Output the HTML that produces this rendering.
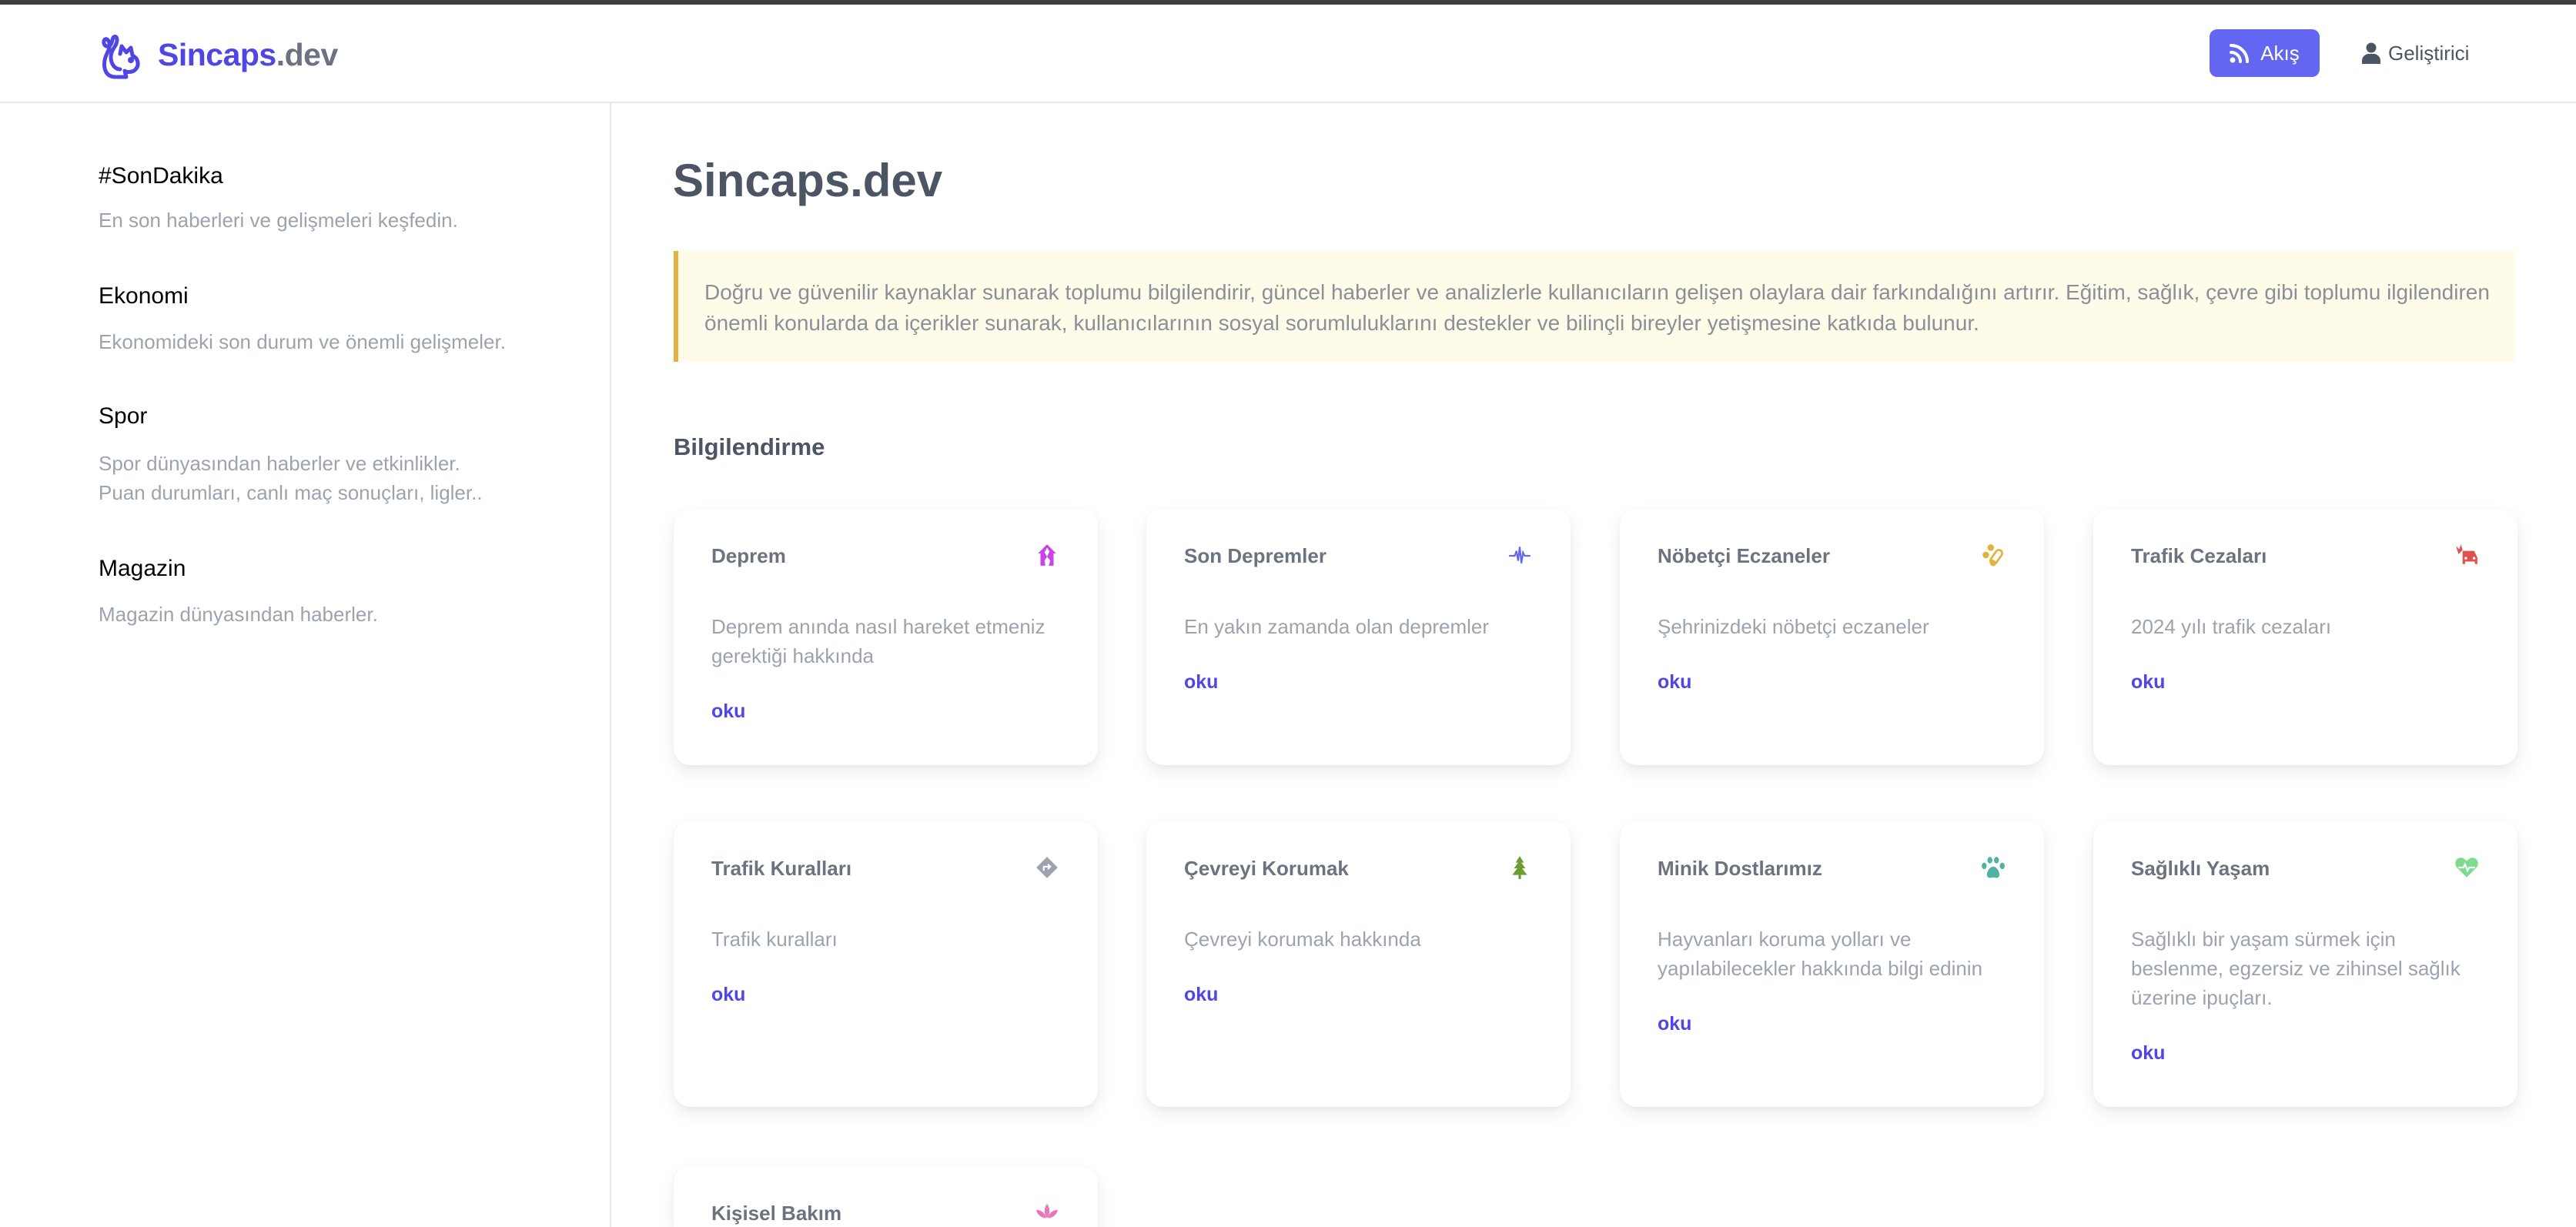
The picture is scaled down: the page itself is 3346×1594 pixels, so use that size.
<!DOCTYPE html>
<html><head><meta charset="utf-8">
<style>
*{box-sizing:border-box;margin:0;padding:0}
html,body{width:3346px;height:1594px;overflow:hidden}
body{background:#fff;font-family:"Liberation Sans",Arial,sans-serif;position:relative}
.wrap{position:absolute;left:0;top:0;width:3346px;height:1594px;overflow:hidden}
.topbar{position:absolute;left:0;top:0;width:3346px;height:6px;background:#3f3f3f}
.header{position:absolute;left:0;top:6px;width:3346px;height:128px;border-bottom:2px solid #e5e7eb}
.logo{position:absolute;left:130px;top:36px}
.brand{position:absolute;left:205px;top:42px;font-size:41px;font-weight:bold;color:#4f46e5;letter-spacing:-0.5px}
.brand span{color:#6b7280}
.btn{position:absolute;left:2870px;top:32px;width:143px;height:62px;background:#6366f1;border-radius:10px;color:#fff;font-size:26px;display:flex;align-items:center;justify-content:center;gap:14px}
.dev{position:absolute;left:3068px;top:32px;height:62px;display:flex;align-items:center;gap:10px;font-size:26px;color:#4b5563}
.side{position:absolute;left:0;top:134px;width:794px;height:1460px;border-right:2px solid #e5e7eb}
.si{position:absolute;left:128px;font-size:30px;color:#000}
.sd{position:absolute;left:128px;font-size:26px;color:#9ca3af;line-height:38px}
.title{position:absolute;left:874px;top:200px;font-size:60px;font-weight:bold;color:#4b5563}
.alert{position:absolute;left:875px;top:326px;width:2392px;height:144px;background:#fefce8;border-left:6px solid #e3b341;padding:34px 0 0 34px;font-size:28px;line-height:40px;color:#8a8f99;white-space:nowrap}
.h2{position:absolute;left:875px;top:563px;font-size:31px;font-weight:bold;color:#4b5563}
.card{position:absolute;width:551px;background:#fff;border-radius:22px;box-shadow:0 10px 24px rgba(0,0,0,0.07),0 2px 8px rgba(0,0,0,0.04);padding:48px 49px}
.ct{font-size:26px;font-weight:bold;color:#6b7280;line-height:26px;height:26px}
.ic{position:absolute;right:50px;top:44px;width:32px;height:32px}
.cd{margin-top:60px;font-size:26px;line-height:38px;color:#9ca3af}
.ok{margin-top:38px;font-size:25px;font-weight:bold;color:#4f46e5;line-height:30px}
</style></head><body><div class="wrap">
<div class="topbar"></div>
<div class="header">
 <svg class="logo" width="58" height="62" viewBox="0 0 58 62" fill="none" stroke="#4f46e5" stroke-width="5" stroke-linecap="round" stroke-linejoin="round">
  <path d="M20 58 C8 58 4 48 6 36 C8 26 14 22 12 14 C10 6 4 8 5 14 C6 20 14 20 16 10 C17 4 22 4 22 10 C22 18 14 22 14 32 C14 42 20 48 26 48"/>
  <path d="M26 28 L28 18 L34 26 L40 20 L42 30 C50 34 52 44 44 50 C40 52 34 52 32 50 L34 58 L22 58"/>
  <circle cx="40" cy="36" r="1.5" fill="#4f46e5"/>
 </svg>
 <div class="brand">Sincaps<span>.dev</span></div>
 <div class="btn"><svg width="26" height="26" viewBox="0 0 26 26"><circle cx="4" cy="22" r="3.5" fill="#fff"/><path d="M2 12a12 12 0 0 1 12 12M2 3a21 21 0 0 1 21 21" stroke="#fff" stroke-width="4" fill="none" stroke-linecap="round"/></svg>Akış</div>
 <div class="dev"><svg width="24" height="28" viewBox="0 0 24 28"><circle cx="12" cy="7" r="6.5" fill="#4b5563"/><path d="M0 28v-4a9 9 0 0 1 9-9h6a9 9 0 0 1 9 9v4z" fill="#4b5563"/></svg>Geliştirici</div>
</div>
<div class="side">
 <div class="si" style="top:78px">#SonDakika</div>
 <div class="sd" style="top:133px">En son haberleri ve gelişmeleri keşfedin.</div>
 <div class="si" style="top:234px">Ekonomi</div>
 <div class="sd" style="top:291px">Ekonomideki son durum ve önemli gelişmeler.</div>
 <div class="si" style="top:390px">Spor</div>
 <div class="sd" style="top:449px">Spor dünyasından haberler ve etkinlikler.<br>Puan durumları, canlı maç sonuçları, ligler..</div>
 <div class="si" style="top:588px">Magazin</div>
 <div class="sd" style="top:645px">Magazin dünyasından haberler.</div>
</div>
<div class="title">Sincaps.dev</div>
<div class="alert">Doğru ve güvenilir kaynaklar sunarak toplumu bilgilendirir, güncel haberler ve analizlerle kullanıcıların gelişen olaylara dair farkındalığını artırır. Eğitim, sağlık, çevre gibi toplumu ilgilendiren<br>önemli konularda da içerikler sunarak, kullanıcılarının sosyal sorumluluklarını destekler ve bilinçli bireyler yetişmesine katkıda bulunur.</div>
<div class="h2">Bilgilendirme</div>

<div class="card" style="left:875px;top:661px;height:333px"><div class="ct">Deprem</div>
<svg class="ic" viewBox="0 0 30 30"><path d="M15 2 L26 13 H23 V28 H17 L19 22 L15 17 L18 11 L15 6 L12 12 L15 17 L12 22 L13 28 H7 V13 H4 Z" fill="#c944e8"/></svg>
<div class="cd">Deprem anında nasıl hareket etmeniz<br>gerektiği hakkında</div><div class="ok">oku</div></div>

<div class="card" style="left:1489px;top:661px;height:333px"><div class="ct">Son Depremler</div>
<svg class="ic" viewBox="0 0 30 30"><path d="M2 16 H9 L11 10 L13 22 L15 5 L17 25 L19 12 L21 16 H28" stroke="#6366f1" stroke-width="2" fill="none"/></svg>
<div class="cd">En yakın zamanda olan depremler</div><div class="ok">oku</div></div>

<div class="card" style="left:2104px;top:661px;height:333px"><div class="ct">Nöbetçi Eczaneler</div>
<svg class="ic" viewBox="0 0 30 30"><circle cx="12" cy="6" r="4" fill="#e0b43c"/><circle cx="6" cy="15" r="4" fill="#e0b43c"/><rect x="15" y="8" width="8" height="19" rx="4" transform="rotate(35 19 17)" fill="none" stroke="#e0b43c" stroke-width="2.5"/><path d="M14 20 l6 4 l-3 4 a4 4 0 0 1 -6 -4z" fill="#e0b43c"/></svg>
<div class="cd">Şehrinizdeki nöbetçi eczaneler</div><div class="ok">oku</div></div>

<div class="card" style="left:2719px;top:661px;height:333px"><div class="ct">Trafik Cezaları</div>
<svg class="ic" viewBox="0 0 30 30"><path d="M2 4 L6 8 L8 2 L10 9 L5 14 Z" fill="#e05252"/><path d="M10 10 H24 L28 18 V26 H25 V23 H13 V26 H10 V18 Z" fill="#e05252"/><circle cx="14" cy="19" r="1.6" fill="#fff"/><circle cx="24" cy="19" r="1.6" fill="#fff"/></svg>
<div class="cd">2024 yılı trafik cezaları</div><div class="ok">oku</div></div>

<div class="card" style="left:875px;top:1067px;height:371px"><div class="ct">Trafik Kuralları</div>
<svg class="ic" viewBox="0 0 30 30"><path d="M15 2 L28 15 L15 28 L2 15 Z" fill="#9ca3af"/><path d="M11 19 V14 H18 M16 11 L19 14 L16 17" stroke="#fff" stroke-width="2" fill="none"/></svg>
<div class="cd">Trafik kuralları</div><div class="ok">oku</div></div>

<div class="card" style="left:1489px;top:1067px;height:371px"><div class="ct">Çevreyi Korumak</div>
<svg class="ic" viewBox="0 0 30 30"><path d="M15 1 L20 9 H17 L22 16 H18 L24 24 H6 L12 16 H8 L13 9 H10 Z" fill="#6b9e2e"/><rect x="13.5" y="24" width="3" height="5" fill="#6b9e2e"/></svg>
<div class="cd">Çevreyi korumak hakkında</div><div class="ok">oku</div></div>

<div class="card" style="left:2104px;top:1067px;height:371px"><div class="ct">Minik Dostlarımız</div>
<svg class="ic" viewBox="0 0 30 30"><ellipse cx="11" cy="6" rx="3" ry="4" fill="#4fb3a3"/><ellipse cx="19" cy="6" rx="3" ry="4" fill="#4fb3a3"/><ellipse cx="4" cy="13" rx="3" ry="4" fill="#4fb3a3"/><ellipse cx="26" cy="13" rx="3" ry="4" fill="#4fb3a3"/><path d="M15 14 C10 14 6 22 8 26 C10 29 13 27 15 27 C17 27 20 29 22 26 C24 22 20 14 15 14Z" fill="#4fb3a3"/></svg>
<div class="cd">Hayvanları koruma yolları ve<br>yapılabilecekler hakkında bilgi edinin</div><div class="ok">oku</div></div>

<div class="card" style="left:2719px;top:1067px;height:371px"><div class="ct">Sağlıklı Yaşam</div>
<svg class="ic" viewBox="0 0 30 30"><path d="M15 27 L3 15 C-1 10 2 3 8 3 C11 3 13 5 15 7 C17 5 19 3 22 3 C28 3 31 10 27 15 Z" fill="#7ddc8e"/><path d="M5 15 H11 L13 11 L16 19 L18 15 H25" stroke="#fff" stroke-width="2" fill="none"/></svg>
<div class="cd">Sağlıklı bir yaşam sürmek için<br>beslenme, egzersiz ve zihinsel sağlık<br>üzerine ipuçları.</div><div class="ok">oku</div></div>

<div class="card" style="left:875px;top:1515px;height:79px;border-bottom-left-radius:0;border-bottom-right-radius:0;padding-bottom:0;overflow:hidden"><div class="ct">Kişisel Bakım</div>
<svg class="ic" viewBox="0 0 30 30"><path d="M15 5 C19 9 19 17 15 22 C11 17 11 9 15 5Z" fill="#e879b9"/><path d="M2 12 C8 12 13 16 14 22 C8 22 3 18 2 12Z" fill="#e879b9"/><path d="M28 12 C22 12 17 16 16 22 C22 22 27 18 28 12Z" fill="#e879b9"/></svg>
</div>
</div></body></html>
